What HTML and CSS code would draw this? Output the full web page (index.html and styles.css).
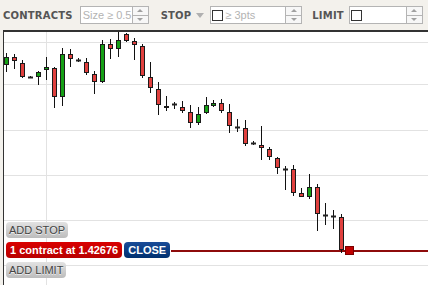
FILE: index.html
```html
<!DOCTYPE html>
<html lang="en">
<head>
  <meta charset="UTF-8">
  <title>Order ticket</title>
  <link rel="stylesheet" href="styles.css">
</head>
<body>
  <div class="toolbar">
    <span class="field-label lbl-contracts">CONTRACTS</span>
    <div class="spin-input in-size">
      <span class="hint">Size ≥ 0.5</span>
      <div class="spinner"><span class="up"></span><span class="down"></span></div>
    </div>
    <span class="field-label lbl-stop">STOP</span>
    <span class="caret"></span>
    <div class="spin-input in-stop">
      <span class="check"></span>
      <span class="hint">≥ 3pts</span>
      <div class="spinner"><span class="up"></span><span class="down"></span></div>
    </div>
    <span class="field-label lbl-limit">LIMIT</span>
    <div class="spin-input in-limit">
      <span class="check"></span>
      <span class="hint"></span>
      <div class="spinner"><span class="up"></span><span class="down"></span></div>
    </div>
  </div>

  <div class="chart">
    <svg id="plot" class="plot" width="424" height="253" viewBox="4 32 424 253">
      <g class="grid">
        <line x1="4" y1="42.5" x2="428" y2="42.5"/>
        <line x1="4" y1="84.5" x2="428" y2="84.5"/>
        <line x1="4" y1="130.5" x2="428" y2="130.5"/>
        <line x1="4" y1="175.5" x2="428" y2="175.5"/>
        <line x1="4" y1="220.5" x2="428" y2="220.5"/>
        <line x1="4" y1="265.5" x2="428" y2="265.5"/>
        <line x1="46.5" y1="32" x2="46.5" y2="285"/>
      </g>
      <line class="price-line" x1="171" y1="251" x2="428" y2="251"/>
      <g id="candles"></g>
      <rect class="entry-mark" x="345.5" y="246.5" width="8" height="8"/>
    </svg>

    <div class="orders">
      <div class="btn btn-add">ADD STOP</div>
      <div class="order-row">
        <div class="btn btn-order">1 contract at 1.42676</div>
        <div class="btn btn-close">CLOSE</div>
      </div>
      <div class="btn btn-add">ADD LIMIT</div>
    </div>
  </div>

  <script>
    // [wickTop, wickBottom, bodyTop, bodyBottom, kind]  r = down, g = up, d = doji
    const candles = [
      [53, 72, 57, 65, "g"], [54, 69, 57, 61, "r"], [60, 78, 63, 77, "r"], [76, 78, 77, 77, "d"],
      [71, 85, 72, 77, "g"], [57, 80, 67, 70, "g"], [67, 108, 68, 97, "r"], [48, 106, 54, 97, "g"],
      [49, 67, 54, 59, "r"], [58, 62, 60, 60, "d"], [58, 75, 62, 73, "r"], [71, 94, 74, 82, "r"],
      [40, 83, 44, 82, "g"], [39, 59, 44, 49, "r"], [32, 57, 40, 49, "g"], [33, 42, 34, 41, "r"],
      [38, 60, 41, 45, "r"], [44, 78, 46, 76, "r"], [62, 93, 77, 88, "r"], [82, 115, 89, 105, "r"],
      [96, 111, 106, 108, "r"], [102, 109, 104, 104, "d"], [101, 113, 107, 111, "r"], [105, 128, 112, 123, "r"],
      [107, 125, 114, 123, "g"], [97, 114, 105, 113, "g"], [100, 107, 103, 106, "g"], [99, 113, 103, 111, "r"],
      [104, 133, 112, 126, "r"], [119, 132, 127, 127, "d"], [120, 146, 128, 144, "r"], [141, 145, 143, 143, "d"],
      [126, 160, 145, 148, "r"], [147, 160, 149, 157, "r"], [157, 174, 158, 168, "r"], [166, 190, 169, 169, "d"],
      [165, 196, 169, 193, "r"], [188, 197, 193, 197, "r"], [174, 199, 187, 197, "g"], [184, 231, 187, 214, "r"],
      [203, 225, 215, 215, "d"], [210, 229, 216, 216, "d"], [214, 253, 217, 250, "r"]
    ];

    const NS = "http://www.w3.org/2000/svg";
    const group = document.getElementById("candles");

    function el(name, attrs) {
      const node = document.createElementNS(NS, name);
      for (const k in attrs) node.setAttribute(k, attrs[k]);
      group.appendChild(node);
      return node;
    }

    candles.forEach((c, i) => {
      const p = Math.round(6 + 7.98 * i);
      const [wt, wb, bt, bb, kind] = c;
      el("line", { x1: p + 0.5, y1: wt, x2: p + 0.5, y2: wb, class: "wick" });
      if (kind === "d") {
        el("rect", { x: p - 2, y: bt - 0.5, width: 5, height: 2, class: "doji" });
      } else {
        el("rect", {
          x: p - 1.5, y: bt + 0.5, width: 4, height: Math.max(bb - bt - 1, 1),
          class: kind === "g" ? "body up" : "body down"
        });
      }
    });
  </script>
</body>
</html>
```

FILE: styles.css
```css
body {
  margin: 0;
  background: #f3f1ec;
  font-family: "Liberation Sans", Arial, sans-serif;
  overflow: hidden;
}

.toolbar {
  display: flex;
  align-items: center;
  height: 30px;
  padding-left: 3px;
}

.field-label {
  font-family: "DejaVu Sans", sans-serif;
  font-weight: bold;
  font-size: 10px;
  letter-spacing: 0.2px;
  color: #555;
}

.lbl-contracts { margin-right: 7px; }
.lbl-stop { margin-left: 12px; }
.lbl-limit { margin-left: 10px; margin-right: 5px; }

.caret {
  width: 0;
  height: 0;
  margin: 0 6px 0 5px;
  border-left: 4px solid transparent;
  border-right: 4px solid transparent;
  border-top: 5px solid #b0b0b0;
}

.spin-input {
  display: flex;
  align-items: center;
  height: 18px;
  background: #fff;
  border: 1px solid #b4b4b4;
  box-sizing: border-box;
}

.in-size { width: 69px; }
.in-stop { width: 92px; }
.in-limit { width: 74px; }

.hint {
  flex: 1;
  font-size: 11px;
  color: #b3b3b3;
  padding-left: 2px;
  white-space: nowrap;
}

.check {
  width: 9px;
  height: 9px;
  margin-left: 1px;
  border: 1px solid #333;
  background: #fff;
}

.spinner {
  display: flex;
  flex-direction: column;
  width: 15px;
  height: 100%;
  border-left: 1px solid #b4b4b4;
  background: #f7f7f7;
}

.spinner span {
  flex: 1;
  display: flex;
  align-items: center;
  justify-content: center;
}

.spinner .up { border-bottom: 1px solid #b4b4b4; }

.spinner .up::after,
.spinner .down::after {
  content: "";
  border-left: 3px solid transparent;
  border-right: 3px solid transparent;
}

.spinner .up::after { border-bottom: 3px solid #a0a0a0; }
.spinner .down::after { border-top: 3px solid #a0a0a0; }

.chart {
  position: relative;
  margin-left: 3px;
  height: 253px;
  background: #fff;
  border-top: 2px solid #333;
  border-left: 1px solid #333;
}

.plot {
  display: block;
}

.grid line {
  stroke: #e2e2e2;
  stroke-width: 1;
}

.price-line {
  stroke: #8e0b0b;
  stroke-width: 2;
}

.wick {
  stroke: #111;
  stroke-width: 1;
}

.body {
  stroke: #1a1a1a;
  stroke-width: 1;
}

.body.down { fill: #e0403e; }
.body.up { fill: #16a016; }

.doji { fill: #222; }

.entry-mark {
  fill: #c00000;
  stroke: #7a0000;
  stroke-width: 1;
}

.orders {
  position: absolute;
  left: 2px;
  top: 190px;
  display: flex;
  flex-direction: column;
  align-items: flex-start;
  gap: 4px;
}

.order-row {
  display: flex;
  gap: 2px;
}

.btn {
  height: 16px;
  line-height: 16px;
  font-size: 11px;
  border-radius: 4px;
  white-space: nowrap;
}

.btn-add {
  padding: 0 3px;
  color: #444;
  background: linear-gradient(#e2e2e2, #bcbcbc);
  text-shadow: 0 1px 0 #eee;
}

.btn-order {
  padding: 0 4px;
  color: #fff;
  font-weight: bold;
  background: linear-gradient(#d90000, #b80000);
}

.btn-close {
  padding: 0 4px;
  color: #fff;
  font-weight: bold;
  background: linear-gradient(#1a4c98, #00306f);
}
```
